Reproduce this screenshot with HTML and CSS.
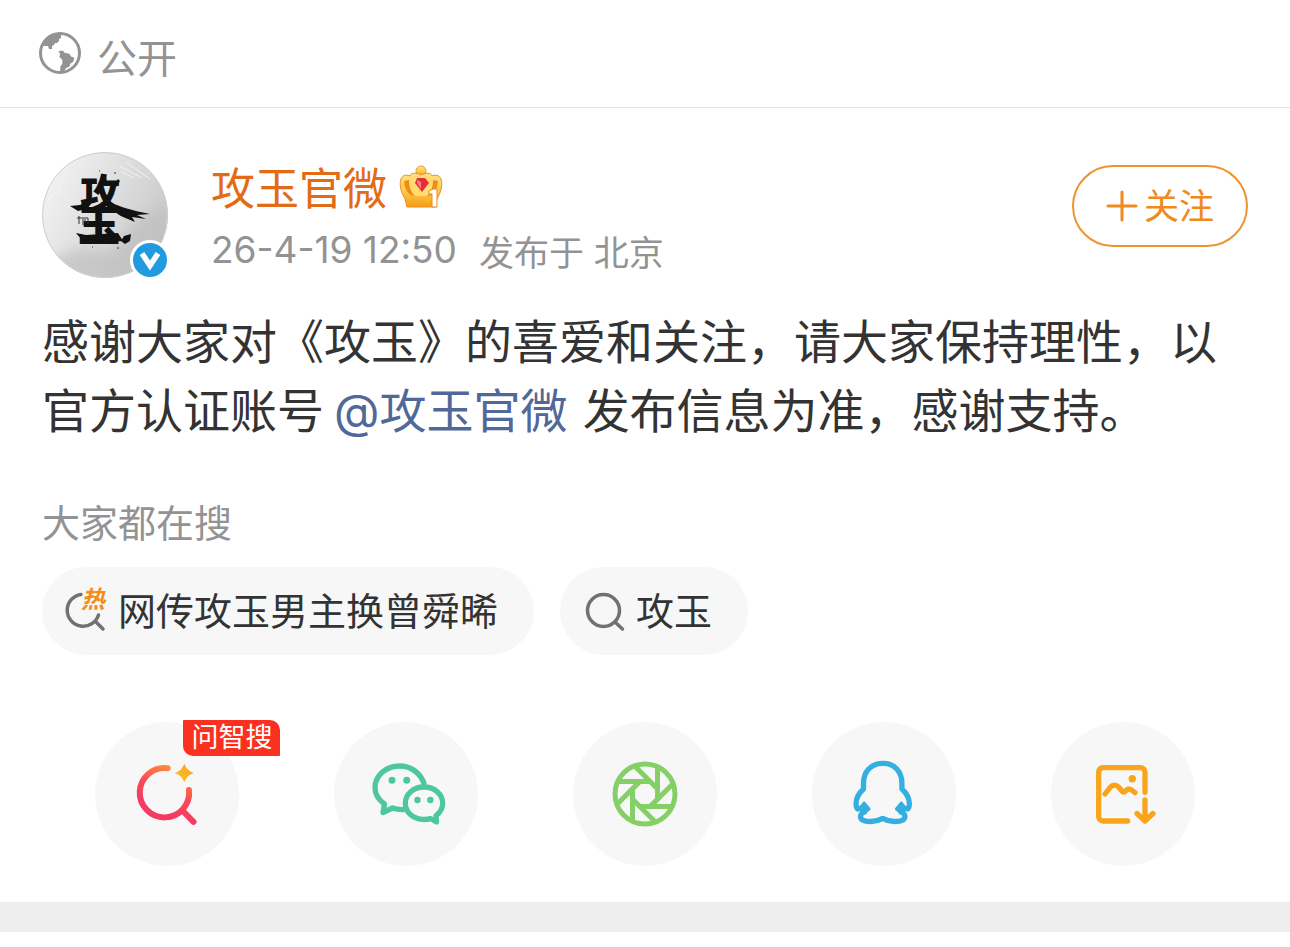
FILE: index.html
```html
<!DOCTYPE html>
<html lang="zh-CN">
<head>
<meta charset="utf-8">
<meta name="viewport" content="width=device-width, initial-scale=1">
<title>攻玉官微</title>
<link rel="stylesheet" href="styles.css">
</head>
<body>
<header class="visibility">
  <svg class="globe" viewBox="0 0 42 42" aria-hidden="true">
    <circle cx="21" cy="21" r="19.500" fill="none" stroke="#939393" stroke-width="3"/>
    <path fill="#939393" d="M22 2v4l-2 1v2l-2 2h-2l-1 2-2 1v3h-3l-1-3H3.500C5 7 12 2 22 2zM19.300 19.700l2-1h3l1 2 5 1 2 3 3 1-1 4-3 2-1 3-3 1-2 3-4 1v-5l2-3v-4l-3-3 1-3z"/>
  </svg>
  <span>公开</span>
</header>
<main>
  <article class="post">
    <div class="author">
      <div class="avatar">
        <svg class="portrait" viewBox="0 0 126 126" role="img" aria-label="攻玉官微头像">
          <defs>
            <linearGradient id="ink" x1="0" y1="0.200" x2="1" y2="0.700"><stop stop-color="#f4f4f4"/><stop offset="0.500" stop-color="#dedede"/><stop offset="1" stop-color="#c6c6c6"/></linearGradient>
            <filter id="mist" x="-20%" y="-20%" width="140%" height="140%"><feGaussianBlur stdDeviation="6"/></filter>
            <clipPath id="round"><circle cx="63" cy="63" r="63"/></clipPath>
          </defs>
          <g clip-path="url(#round)">
            <path fill="url(#ink)" d="M0 0h126v126H0z"/>
            <path fill="#bcbcbc" opacity=".6" filter="url(#mist)" d="M8 108l28-12 34 4 24-30 32-18v80H20z"/>
            <path fill="none" stroke="#fff" opacity=".6" stroke-width="1" d="M78 14l22 12M84 10l24 17M80 20l12 6M6 48l14-12"/>
          </g>
          <circle cx="63" cy="63" r="62.500" fill="none" stroke="#d0d0d0"/>
          <g class="brush">
            <text x="38" y="56" font-size="40">攻</text>
            <text x="36" y="89" font-size="42">玉</text>
            <path d="M28 54l10-1 7-4 4 3-4 5-9 2zM70 51c9 4 18 7 38 11l-13 1 9 4-14-2 3 5-12-5c-7-3-12-9-16-13zM34 81l10 2 32-2 5 8-28 1-10 2zM82 84l7-2-1 7-5 3-4-3zM59 24l5-1 1 8-4 2zM76 27l2 2-4 6-2-2z"/>
            <path fill="none" stroke="#333" stroke-width="1" d="M35 66h11M37 64v8M41 67v6M43 67v4M46 66v6M73 20v2M50 95h1M76 95v2M57 19h1"/>
          </g>
        </svg>
        <span class="verified">
          <svg viewBox="0 0 34 34" role="img" aria-label="认证"><path d="M9 10.500L17 22.500l8-12" fill="none" stroke="#fff" stroke-width="5.500"/></svg>
        </span>
      </div>
      <div class="identity">
        <div class="name-row">
          <a class="name" href="#">攻玉官微</a>
          <svg class="crown" viewBox="0 0 44 44" role="img" aria-label="1级">
            <defs><linearGradient id="gold" x1="0" y1="0" x2="0" y2="1"><stop stop-color="#ffe58a"/><stop offset=".55" stop-color="#fdc849"/><stop offset="1" stop-color="#f59b16"/></linearGradient></defs>
            <circle cx="22" cy="6" r="5" fill="url(#gold)" stroke="#ed9e37"/>
            <path d="M8 42L6 34C2 27 0 20 2 14c2-5 7-4 9-3 1-4 7-3 11-1 4-2 10-3 11 1 2-1 7-2 9 3 2 6 0 13-4 20l-2 8z" fill="url(#gold)" stroke="#ed8b22"/>
            <path d="M5 16c1 9 4 14 10 15-2-4-5-8-5-16M39 16c-1 9-4 14-10 15 2-4 5-8 5-16" fill="#f18b17"/>
            <path d="M11 13c-2 8 1 14 6 18h10c5-4 8-10 6-18-3-4-7-2-11-1-4-1-8-3-11 1z" fill="#ffdc70"/>
            <path d="M18 13h8l4 5-7 9-7-9z" fill="#e52e39"/><path d="M18 15l4 2v7l-4-6z" fill="#ff7f81"/>
            <path d="M30 29v-3l4-2h4v18h-5V29z" fill="#fff" stroke="#e98920"/>
          </svg>
        </div>
        <p class="meta"><time>26-4-19 12:50</time><span>发布于 北京</span></p>
      </div>
      <button class="follow" type="button">
        <svg viewBox="0 0 32 32" aria-hidden="true"><path d="M16 2v28M2 16h28" stroke="#f08a20" stroke-width="3" stroke-linecap="round"/></svg>关注
      </button>
    </div>
    <p class="content">感谢大家对《攻玉》的喜爱和关注，请大家保持理性，以官方认证账号<a href="#">@攻玉官微</a> 发布信息为准，感谢支持。</p>
    <section class="trending">
      <h2>大家都在搜</h2>
      <div class="tags">
        <a class="tag" href="#">
          <svg class="lens" viewBox="0 0 42 42" aria-hidden="true">
            <path d="M17 4.400A16 16 0 1 0 34.500 25M31 31l8 8" fill="none" stroke="#717171" stroke-width="3.500" stroke-linecap="round"/>
            <text class="hot" x="17" y="18">热</text>
          </svg>网传攻玉男主换曾舜晞
        </a>
        <a class="tag" href="#">
          <svg class="lens" viewBox="0 0 42 42" aria-hidden="true"><circle cx="21.500" cy="20.500" r="16" fill="none" stroke="#717171" stroke-width="3.500"/><path d="M33 32l7.500 7" stroke="#717171" stroke-width="3.500" stroke-linecap="round"/></svg>攻玉
        </a>
      </div>
    </section>
  </article>
  <nav class="share" aria-label="分享">
    <button type="button" aria-label="问智搜">
      <svg viewBox="0 0 144 144" aria-hidden="true">
        <defs>
          <linearGradient id="warm" gradientUnits="userSpaceOnUse" x1="88" y1="44" x2="68" y2="88"><stop stop-color="#ff9f35"/><stop offset=".6" stop-color="#f94b57"/><stop offset="1" stop-color="#f53b63"/></linearGradient>
          <linearGradient id="star" x1="1" y1="0" x2="0" y2="1"><stop stop-color="#ff9b25"/><stop offset="1" stop-color="#f7ca25"/></linearGradient>
        </defs>
        <path d="M72.700 46.200A24.700 24.700 0 1 0 94 68M87 88l11.500 11.800" fill="none" stroke="url(#warm)" stroke-width="6" stroke-linecap="round" stroke-linejoin="round"/>
        <path d="M89.300 41.500c1.800 5 4.500 7.700 9.500 9.500-5 1.800-7.700 4.500-9.500 9.500-1.800-5-4.500-7.700-9.500-9.500 5-1.800 7.700-4.500 9.500-9.500z" fill="url(#star)"/>
      </svg>
      <span class="flag">问智搜</span>
    </button>
    <button type="button" aria-label="微信">
      <svg viewBox="0 0 144 144" aria-hidden="true">
        <g fill="none" stroke="#4dc89d" stroke-width="5.300" stroke-linejoin="round">
          <path d="M90.500 63C87 51 77 44 65.500 44 52 44 41 53.500 41 65.700c0 7 4 12.300 9.500 16.300L49 90.500l9.500-4.500c4 1.500 8 1.700 12 1.500"/>
          <path d="M90 65c-10.500 0-18.700 7-18.700 16.200S79.500 97.500 90 97.500c3 0 4.500-.2 6.500-1l6 3.500-.5-6.500c4-3 6.700-7 6.700-12.300C108.700 72 100.500 65 90 65z"/>
        </g>
        <g fill="#4dc89d"><circle cx="58" cy="58.300" r="3.500"/><circle cx="72.700" cy="58.300" r="3.500"/><circle cx="83.500" cy="78" r="3.200"/><circle cx="96.300" cy="78" r="3.200"/></g>
      </svg>
    </button>
    <button type="button" aria-label="朋友圈">
      <svg viewBox="0 0 144 144" aria-hidden="true">
        <defs><path id="blade" d="M-26-12.500H5"/></defs>
        <g transform="translate(72 72)" fill="none" stroke="#84d066" stroke-width="5">
          <circle r="30"/>
          <use href="#blade"/><use href="#blade" transform="rotate(45)"/><use href="#blade" transform="rotate(90)"/><use href="#blade" transform="rotate(135)"/><use href="#blade" transform="rotate(180)"/><use href="#blade" transform="rotate(225)"/><use href="#blade" transform="rotate(270)"/><use href="#blade" transform="rotate(315)"/>
        </g>
      </svg>
    </button>
    <button type="button" aria-label="QQ">
      <svg viewBox="0 0 144 144" aria-hidden="true">
        <g stroke="#35aee0" stroke-linejoin="round">
          <path d="M70.700 41.300C59 41.300 51.500 50 51.500 61v6c-4.500 4-7.500 9.500-7.500 15 0 2 .4 3.500 1.500 5 2 0 4-1 6-3l1 6c-3 1-4 2.500-4 4.500 0 4 5 5 10.500 5 5 0 8-1.200 11.700-3.200 3.700 2 6.700 3.200 11.700 3.200 5.500 0 10.500-1 10.500-5 0-2-1-3.500-4-4.500l1-6c2 2 4 3 6 3 1.100-1.500 1.500-3 1.500-5 0-5.500-3-11-7.500-15v-6c0-11-7.500-19.700-18.200-19.700z" fill="none" stroke-width="5.300"/>
          <path d="M48 87l4-6 5 6-5 4zM93.400 87l-4-6-5 6 5 4z" fill="#35aee0" stroke-width="3"/>
        </g>
      </svg>
    </button>
    <button type="button" aria-label="保存图片">
      <svg viewBox="0 0 144 144" aria-hidden="true">
        <path d="M76.700 99H52a4.300 4.300 0 0 1-4.300-4.300V50a4.300 4.300 0 0 1 4.300-4.300h37.500A4.500 4.500 0 0 1 94 50v20.300M94 78v21M86 91.500l8 7.500 8-7.500M54 72l5-6.500c3-3.500 6.500-3 9 0l3 3.700c1 1.200 2 1.200 3 .2 3-3.400 5.500-3.400 10 1.300" fill="none" stroke="#f8a51b" stroke-width="5.300" stroke-linecap="round" stroke-linejoin="round"/>
        <circle cx="81.300" cy="56.700" r="3.700" fill="#f8a51b"/>
      </svg>
    </button>
  </nav>
</main>
<div class="divider"></div>
</body>
</html>
```

FILE: styles.css
```css
* { box-sizing: border-box; }
body {
  margin: 0;
  background: #fff;
  color: #333;
  font-family: Inter, "Noto Sans CJK SC", sans-serif;
}
a { color: inherit; text-decoration: none; }
button { font: inherit; cursor: pointer; }
p, h2 { margin: 0; font-weight: 400; }
svg { display: block; flex: none; }

.visibility {
  display: flex;
  align-items: flex-start;
  gap: 16px;
  padding: 32px 39px 22px;
  border-bottom: 1px solid #e3e3e3;
  color: #939393;
  font-size: 40px;
  line-height: 53px;
}
.globe { width: 42px; height: 42px; }

.post { padding: 44px 42px 0; }
.author { display: flex; align-items: flex-start; }
.avatar { position: relative; flex: none; margin-right: 43px; }
.portrait { width: 126px; height: 126px; }
.brush {
  fill: #111;
  font-family: "Noto Sans CJK SC", sans-serif;
  font-weight: 900;
}
.verified {
  position: absolute;
  right: -2px;
  bottom: -2px;
  width: 40px;
  border: 3px solid #fff;
  border-radius: 50%;
  background: #229ae0;
}
.identity { flex: 1; min-width: 0; padding-top: 8px; }
.name-row { display: flex; align-items: center; gap: 12px; }
.name { color: #e36b16; font-size: 44px; line-height: 58px; }
.crown { width: 44px; height: 44px; margin-bottom: 4px; }
.meta {
  display: flex;
  align-items: flex-start;
  gap: 22px;
  color: #939393;
  font-size: 35px;
  line-height: 70px;
}
.meta time { font-size: 37px; line-height: 64px; }
.follow {
  display: flex;
  align-items: center;
  gap: 6px;
  margin: 13px 0 0;
  padding: 0 32px;
  border: 2px solid #ed9430;
  border-radius: 48px;
  background: #fff;
  color: #f08a20;
  font-size: 35px;
  line-height: 78px;
}
.follow svg { width: 32px; height: 32px; }

.content { margin-top: 19px; font-size: 47px; line-height: 69px; }
.content a { margin: 0 2px 0 10px; color: #50689a; }

.trending { margin-top: 50px; }
.trending h2 { color: #939393; font-size: 38px; line-height: 56px; }
.tags { display: flex; flex-wrap: wrap; gap: 26px; margin-top: 16px; }
.tag {
  display: flex;
  align-items: center;
  gap: 12px;
  padding: 0 36px 0 22px;
  border-radius: 44px;
  background: #f7f7f7;
  font-size: 38px;
  line-height: 88px;
}
.lens { width: 42px; height: 42px; overflow: visible; }
.hot {
  fill: #f68b17;
  font-family: "Noto Sans CJK SC", sans-serif;
  font-size: 24px;
  font-style: italic;
  font-weight: 700;
}

.share {
  display: grid;
  grid-template-columns: repeat(5, 1fr);
  justify-items: center;
  padding: 67px 48px 36px;
}
.share button {
  position: relative;
  width: 144px;
  padding: 0;
  border: 0;
  border-radius: 50%;
  background: #f7f7f7;
}
.flag {
  position: absolute;
  top: -2px;
  left: 88px;
  padding: 0 8px;
  border-radius: 1px 10px 1px 10px;
  background: #fa3020;
  color: #fff;
  font-size: 27px;
  line-height: 36px;
  white-space: nowrap;
}
.divider { height: 30px; background: #ededed; }
```
